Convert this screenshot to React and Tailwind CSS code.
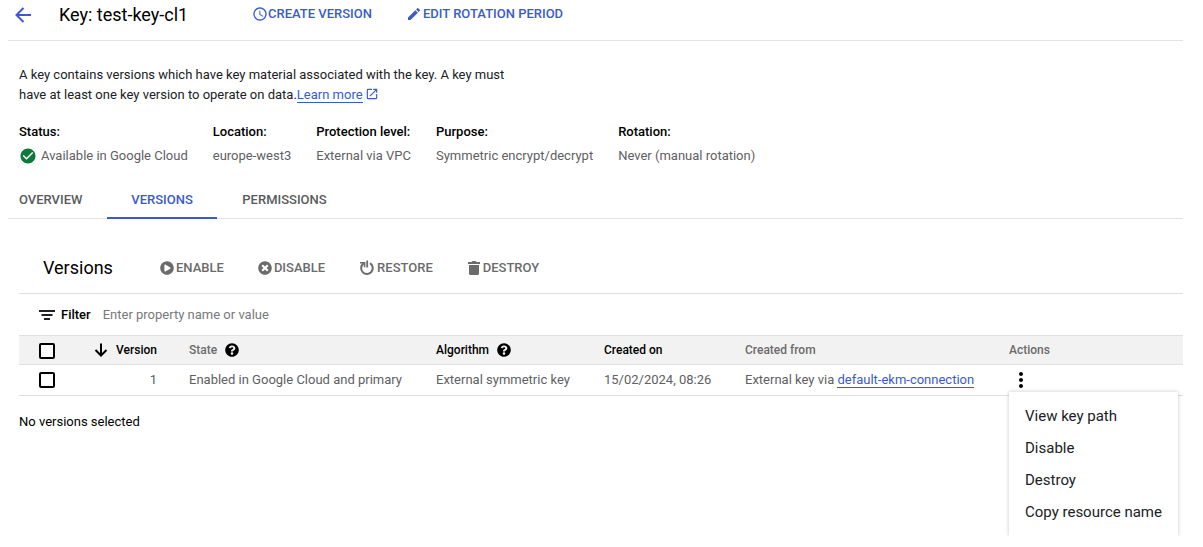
import React from "react";
import { MdAccessTime, MdEdit, MdOpenInNew, MdCheckCircle, MdMoreVert } from "react-icons/md";
import { FaPlayCircle, FaTimesCircle, FaQuestionCircle } from "react-icons/fa";

const BackIcon = () => (
  <svg viewBox="0 0 16 16" className="size-4" fill="none" stroke="currentColor" strokeWidth="2" aria-hidden="true">
    <path d="M16 8H1.5M8.5 1L1.5 8l7 7" />
  </svg>
);

const SortIcon = () => (
  <svg viewBox="0 0 14 16" className="h-4 w-3.5" fill="none" stroke="currentColor" strokeWidth="2" aria-hidden="true">
    <path d="M7 1.5V13M1.5 8L7 13.5L12.5 8" />
  </svg>
);

const RestoreIcon = () => (
  <svg viewBox="0 0 16 16" className="size-4" fill="none" stroke="currentColor" strokeWidth="2" aria-hidden="true">
    <path d="M11 3.2A5.8 5.8 0 1 1 4.6 3.4" />
    <path d="M1 2.8h4.6v4.4" strokeWidth="1.6" />
    <path d="M8.2 0.5v7" strokeWidth="1.8" />
  </svg>
);

const TrashIcon = () => (
  <svg viewBox="0 0 14 16" className="h-4 w-3.5" fill="currentColor" aria-hidden="true">
    <path d="M1 2h3.5l1-1h3l1 1H13v2H1zM2 5h10v8.5a1.5 1.5 0 0 1-1.5 1.5h-7A1.5 1.5 0 0 1 2 13.5z" />
  </svg>
);

const FilterIcon = () => (
  <svg viewBox="0 0 16 12" className="h-3 w-4" fill="currentColor" aria-hidden="true">
    <path d="M0 1h16v2H0zM2.5 5h11v2h-11zM5 9h6v2H5z" />
  </svg>
);

const details = [
  ["Status:", "Available in Google Cloud"],
  ["Location:", "europe-west3"],
  ["Protection level:", "External via VPC"],
  ["Purpose:", "Symmetric encrypt/decrypt"],
  ["Rotation:", "Never (manual rotation)"],
];

const tools = [
  ["ENABLE", <FaPlayCircle className="size-3.5" />],
  ["DISABLE", <FaTimesCircle className="size-3.5" />],
  ["RESTORE", <RestoreIcon />],
  ["DESTROY", <TrashIcon />],
];

const menuItems = ["View key path", "Disable", "Destroy", "Copy resource name"];

function Box({ label }) {
  return (
    <input
      type="checkbox"
      aria-label={label}
      className="block size-4 appearance-none rounded-xs border-2 border-black bg-white checked:bg-black"
    />
  );
}

export default function App() {
  return (
    <main className="min-h-screen bg-white pr-5 pl-2 font-['Roboto',sans-serif] text-[13px] leading-5 text-[#202124]">
      <header className="flex h-[41px] items-start border-b border-[#e3e3e3] pt-[5px] pl-[7px]">
        <button aria-label="Back" className="mt-0.5 text-[#3b5bcc]"><BackIcon /></button>
        <h1 className="ml-7 w-[193px] text-lg leading-5 text-black">Key: test-key-cl1</h1>
        <div className="flex gap-[34px] leading-[18px] font-medium text-[#3b5bcc]">
          <button className="flex items-center"><MdAccessTime className="size-4" />CREATE VERSION</button>
          <button className="flex items-center gap-px"><MdEdit className="size-4" />EDIT ROTATION PERIOD</button>
        </div>
      </header>

      <p className="mt-6 max-w-[510px] pl-[11px]">
        A key contains versions which have key material associated with the key. A key must have at least one key version to operate on data.
        <a href="#learn" className="text-[#3b5bcc]"><span className="border-b border-[#3b5bcc]">Learn more</span><MdOpenInNew className="ml-0.5 inline size-3.5 align-[-2px]" /></a>
      </p>

      <dl className="mt-[17px] flex gap-[25px] pl-[11px]">
        {details.map(([name, value], i) => (
          <div key={name}>
            <dt className="font-medium text-black">{name}</dt>
            <dd className="mt-1 flex items-center gap-1 text-[#5f6063]">
              {i === 0 && <MdCheckCircle className="size-[18px] text-[#0b7a3b]" />}
              {value}
            </dd>
          </div>
        ))}
      </dl>

      <nav className="mt-4 flex border-b border-[#e3e3e3] font-medium text-[#5a5b5e]">
        <a href="#overview" className="w-[99px] py-2 pl-[11px]">OVERVIEW</a>
        <a href="#versions" aria-current="page" className="-mb-px w-[110px] border-b-2 border-[#3b5bcc] pt-2 pb-[7px] text-center text-[#3b5bcc]">VERSIONS</a>
        <a href="#permissions" className="w-[135px] py-2 text-center">PERMISSIONS</a>
      </nav>

      <section className="pl-[11px]">
        <div className="mt-6 flex h-[51px] items-center border-b border-[#e0e0e0] pl-6">
          <h2 className="w-[117px] text-lg text-black">Versions</h2>
          <div className="flex gap-[34px] font-medium text-[#6b6b6b]">
            {tools.map(([name, icon]) => (
              <button key={name} className="flex items-center gap-0.5">{icon}{name}</button>
            ))}
          </div>
        </div>
        <div className="flex h-[41px] items-center pl-5">
          <FilterIcon />
          <label htmlFor="filter" className="ml-1.5 font-medium text-black">Filter</label>
          <input id="filter" placeholder="Enter property name or value" className="ml-3 min-w-0 flex-1 outline-none placeholder:text-[#77787b]" />
        </div>

        <table className="w-full table-fixed border-collapse text-left">
          <colgroup>
            <col className="w-16" />
            <col className="w-[90px]" />
            <col className="w-[247px]" />
            <col className="w-[168px]" />
            <col className="w-[141px]" />
            <col className="w-[264px]" />
            <col />
          </colgroup>
          <thead className="bg-[#f2f2f2]">
            <tr className="h-[29px] border-y border-[#e0e0e0] text-xs text-black [&>th]:p-0 [&>th]:font-medium">
              <th><div className="pt-0.5 pl-5"><Box label="Select all versions" /></div></th>
              <th><div className="flex items-center justify-end gap-2 pr-4"><SortIcon />Version</div></th>
              <th><div className="flex items-center gap-2 pl-4 text-[#6b6b6b]">State<FaQuestionCircle className="size-3.5 text-black" /></div></th>
              <th><div className="flex items-center gap-2 pl-4">Algorithm<FaQuestionCircle className="size-3.5 text-black" /></div></th>
              <th><div className="pl-4">Created on</div></th>
              <th><div className="pl-4 text-[#6b6b6b]">Created from</div></th>
              <th><div className="pl-4 text-[#6b6b6b]">Actions</div></th>
            </tr>
          </thead>
          <tbody>
            <tr className="h-[31px] border-b border-[#e0e0e0] text-[#5f6063] [&>td]:p-0">
              <td><div className="pl-5"><Box label="Select version 1" /></div></td>
              <td><div className="pr-4 text-right">1</div></td>
              <td><div className="pl-4">Enabled in Google Cloud and primary</div></td>
              <td><div className="pl-4">External symmetric key</div></td>
              <td><div className="pl-4">15/02/2024, 08:26</div></td>
              <td><div className="pl-4">External key via <a href="#connection" className="border-b border-[#3b5bcc] text-[#3b5bcc]">default-ekm-connection</a></div></td>
              <td>
                <div className="relative pl-4">
                  <button aria-label="Version actions" aria-expanded="true" className="block text-black"><MdMoreVert className="size-6" /></button>
                  <div className="absolute top-full left-3 -mt-1 overflow-hidden px-1 pt-1">
                    <ul role="menu" className="bg-white px-4 py-2 text-[15px] leading-8 whitespace-nowrap text-[#202124] shadow-[0_0_4px_rgba(0,0,0,0.22)]">
                      {menuItems.map((item) => (
                        <li key={item} role="none"><button role="menuitem" className="block">{item}</button></li>
                      ))}
                    </ul>
                  </div>
                </div>
              </td>
            </tr>
          </tbody>
        </table>
        <p className="mt-4 text-black">No versions selected</p>
      </section>
    </main>
  );
}
